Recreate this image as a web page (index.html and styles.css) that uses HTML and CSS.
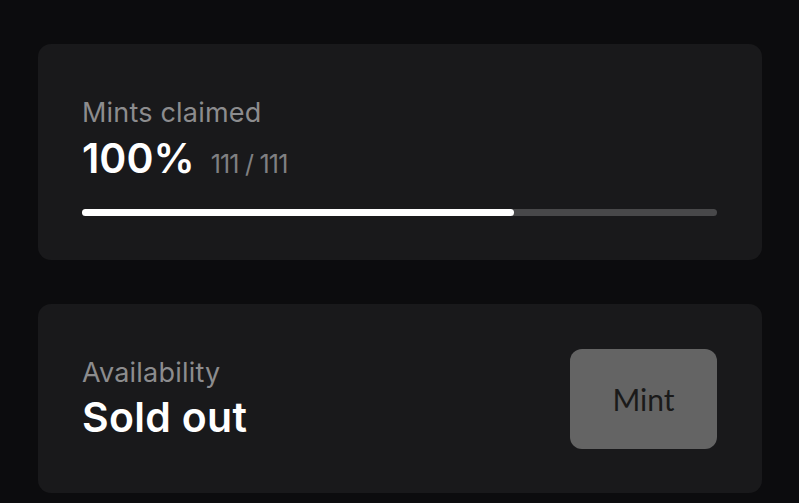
FILE: index.html
```html
<!DOCTYPE html>
<html lang="en">
<head>
    <meta charset="UTF-8">
    <meta name="viewport" content="width=device-width, initial-scale=1.0">
    <title>Mint</title>
    <link rel="stylesheet" href="styles.css">
</head>
<body>
    <div class="card claimed">
        <div class="label">Mints claimed</div>
        <div class="amount">
            <span class="percent">100%</span>
            <span class="count">111 / 111</span>
        </div>
        <div class="progress">
            <div class="progress-fill" style="width: 68%"></div>
        </div>
    </div>

    <div class="card availability">
        <div class="status">
            <div class="label">Availability</div>
            <div class="value">Sold out</div>
        </div>
        <button class="mint-button" disabled>Mint</button>
    </div>
</body>
</html>
```

FILE: styles.css
```css
html {
    background-color: #0c0c0e;
}
body {
    margin: 0;
    padding: 44px 37px 0 38px;
    font-family: Inter, "Noto Sans", sans-serif;
    color: #fff;
}
.card {
    background-color: #19191b;
    border-radius: 13px;
    padding: 53px 45px 44px 44px;
}
.label {
    font-size: 27px;
    line-height: 31px;
    letter-spacing: 0.2px;
    color: #8c8c8e;
}
.amount {
    display: flex;
    align-items: baseline;
    gap: 16px;
    margin-top: 6px;
}
.percent {
    font-size: 41px;
    line-height: 48px;
    font-weight: 600;
}
.count {
    font-size: 25px;
    letter-spacing: -0.8px;
    color: #808082;
}
.progress {
    margin-top: 27px;
    height: 7px;
    border-radius: 4px;
    background-color: #48484a;
}
.progress-fill {
    height: 100%;
    border-radius: 4px;
    background-color: #fff;
}
.availability {
    margin-top: 44px;
    padding-top: 45px;
    display: flex;
    align-items: center;
    justify-content: space-between;
}
.value {
    margin-top: 5px;
    font-size: 41px;
    line-height: 48px;
    font-weight: 600;
    letter-spacing: 0.3px;
}
.mint-button {
    width: 147px;
    height: 100px;
    border: none;
    border-radius: 12px;
    background-color: #646464;
    color: #1a1a1a;
    font-family: Lato, sans-serif;
    font-size: 30px;
    cursor: not-allowed;
}
```
